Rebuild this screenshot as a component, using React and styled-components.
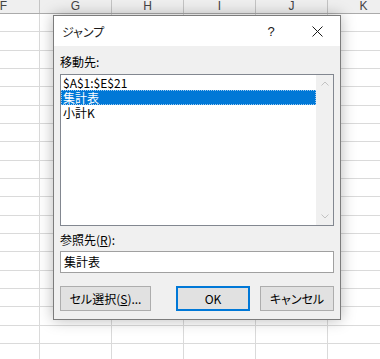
import React from "react";
import styled, { createGlobalStyle } from "styled-components";

const GlobalStyle = createGlobalStyle`
  html, body {
    margin: 0;
    padding: 0;
    background: #ffffff;
    overflow: hidden;
  }
  body {
    font-family: "Noto Sans CJK JP", "Liberation Sans", sans-serif;
  }
`;

const COLUMNS = ["F", "G", "H", "I", "J", "K"];
const ROW_COUNT = 19;

const Sheet = styled.div`
  position: relative;
  width: 380px;
  height: 359px;
  overflow: hidden;
  background: #ffffff;
`;

const HeaderRow = styled.div`
  display: flex;
  height: 13px;
  margin-left: -32px;
  background: #efefef;
  border-bottom: 1px solid #ababab;
`;

const HeaderCell = styled.div`
  flex: 0 0 72px;
  box-sizing: border-box;
  border-right: 1px solid #c4c4c4;
  font-family: "Liberation Sans", Arial, sans-serif;
  font-size: 12px;
  line-height: 13px;
  color: #444444;
  text-align: center;
`;

const GridRow = styled.div`
  display: flex;
  height: 18.33px;
  margin-left: -32px;
`;

const GridCell = styled.div`
  flex: 0 0 72px;
  box-sizing: border-box;
  border-right: 1px solid #dadada;
  border-bottom: 1px solid #dadada;
`;

const Dialog = styled.div`
  position: absolute;
  left: 53px;
  top: 15px;
  width: 288px;
  height: 305px;
  box-sizing: border-box;
  border: 1px solid #7c7c7c;
  background: #f0f0f0;
  box-shadow: 0 0 14px rgba(0, 0, 0, 0.28);
  display: flex;
  flex-direction: column;
  font-family: "Noto Sans CJK JP", "Liberation Sans", sans-serif;
  font-feature-settings: "palt";
  font-size: 12px;
  color: #000000;
`;

const TitleBar = styled.div`
  height: 30px;
  background: #ffffff;
  display: flex;
  align-items: center;
  padding-left: 8px;
`;

const Title = styled.span`
  flex: 1;
  font-size: 12px;
  color: #1a1a1a;
`;

const TitleButton = styled.div`
  width: 46px;
  height: 30px;
  display: flex;
  align-items: center;
  justify-content: center;
  font-family: "Liberation Sans", Arial, sans-serif;
  font-size: 13px;
  color: #1a1a1a;
`;

const Body = styled.div`
  flex: 1;
  display: flex;
  flex-direction: column;
  padding: 8px 6px 0 6px;
`;

const Label = styled.div`
  height: 16px;
  line-height: 16px;
  margin-top: ${(p) => p.$top || 0}px;
  margin-bottom: ${(p) => p.$bottom || 0}px;
`;

const ListBox = styled.div`
  height: 152px;
  box-sizing: border-box;
  border: 1px solid #828790;
  background: #ffffff;
  display: flex;
`;

const Items = styled.div`
  flex: 1;
  min-width: 0;
`;

const Item = styled.div`
  height: 15px;
  line-height: 13px;
  box-sizing: border-box;
  padding-left: 1px;
  color: ${(p) => (p.$selected ? "#ffffff" : "#000000")};
  background: ${(p) => (p.$selected ? "#0078d7" : "transparent")};
  border: 1px ${(p) => (p.$selected ? "dotted #9cc9f0" : "solid transparent")};
  white-space: nowrap;
  overflow: hidden;
`;

const ScrollBar = styled.div`
  width: 17px;
  background: #f0f0f0;
  display: flex;
  flex-direction: column;
  justify-content: space-between;
  align-items: center;
  padding: 6px 0;
`;

const TextBox = styled.div`
  height: 22px;
  box-sizing: border-box;
  border: 1px solid #a0a0a0;
  background: #ffffff;
  line-height: 20px;
  padding-left: 3px;
`;

const ButtonRow = styled.div`
  display: flex;
  margin-top: 13px;
`;

const Button = styled.div`
  width: ${(p) => p.$width}px;
  height: 25px;
  margin-left: ${(p) => p.$gap || 0}px;
  box-sizing: border-box;
  border: 1px solid ${(p) => (p.$default ? "#0078d7" : "#adadad")};
  box-shadow: ${(p) => (p.$default ? "inset 0 0 0 1px #0078d7" : "none")};
  background: #e1e1e1;
  display: flex;
  align-items: center;
  justify-content: center;
`;

const Key = styled.span`
  text-decoration: underline;
`;

const Chevron = ({ up }) => (
  <svg width="8" height="5" viewBox="0 0 8 5">
    <path
      d={up ? "M0.5 4.5 L4 1 L7.5 4.5" : "M0.5 0.5 L4 4 L7.5 0.5"}
      fill="none"
      stroke="#c2c2c2"
      strokeWidth="1"
    />
  </svg>
);

const CloseIcon = () => (
  <svg width="11" height="11" viewBox="0 0 11 11">
    <path d="M0.5 0.5 L10.5 10.5 M10.5 0.5 L0.5 10.5" stroke="#1a1a1a" strokeWidth="1" />
  </svg>
);

const App = () => {
  return (
    <Sheet>
      <GlobalStyle />
      <HeaderRow>
        {COLUMNS.map((c) => (
          <HeaderCell key={c}>{c}</HeaderCell>
        ))}
      </HeaderRow>
      {Array.from({ length: ROW_COUNT }).map((_, r) => (
        <GridRow key={r}>
          {COLUMNS.map((c) => (
            <GridCell key={c} />
          ))}
        </GridRow>
      ))}

      <Dialog>
        <TitleBar>
          <Title>ジャンプ</Title>
          <TitleButton>?</TitleButton>
          <TitleButton>
            <CloseIcon />
          </TitleButton>
        </TitleBar>
        <Body>
          <Label $bottom={4}>移動先:</Label>
          <ListBox>
            <Items>
              <Item>$A$1:$E$21</Item>
              <Item $selected>集計表</Item>
              <Item>小計K</Item>
            </Items>
            <ScrollBar>
              <Chevron up />
              <Chevron />
            </ScrollBar>
          </ListBox>
          <Label $top={6} $bottom={3}>
            参照先(<Key>R</Key>):
          </Label>
          <TextBox>集計表</TextBox>
          <ButtonRow>
            <Button $width={91}>
              セル選択(<Key>S</Key>)...
            </Button>
            <Button $width={74} $gap={25} $default>
              OK
            </Button>
            <Button $width={74} $gap={10}>
              キャンセル
            </Button>
          </ButtonRow>
        </Body>
      </Dialog>
    </Sheet>
  );
};

export default App;
